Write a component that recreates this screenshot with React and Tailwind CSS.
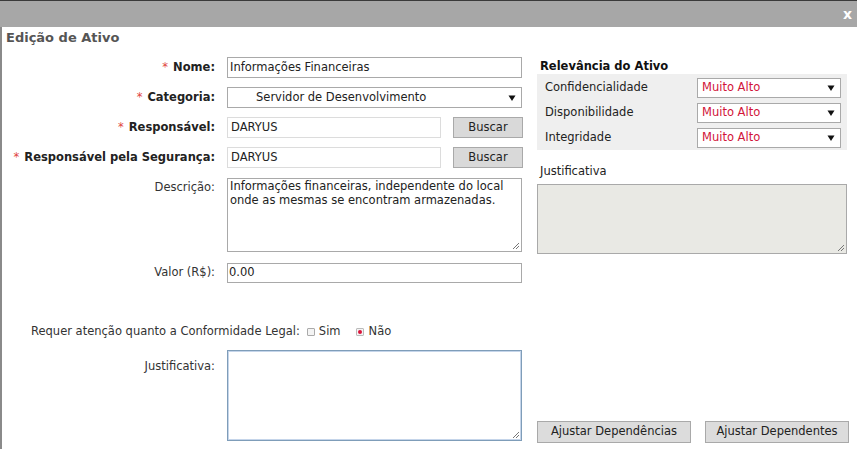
import React from "react";

const Arrow = () => (
  <svg width="8" height="8" viewBox="0 0 8 8" className="block">
    <path d="M0.5 1.5 L7.5 1.5 L4 7 Z" fill="#111" />
  </svg>
);

const Grip = () => (
  <svg width="9" height="9" viewBox="0 0 9 9" className="absolute right-[1px] bottom-[1px]">
    <path d="M8 2 L2 8 M8 5 L5 8" stroke="#777" strokeWidth="1" />
  </svg>
);

function Label({ req, bold, children }) {
  return (
    <div className={`w-[213px] shrink-0 text-right ${bold ? "font-bold text-[#222]" : "text-[#333]"}`}>
      {req && <span className="text-[#e0443e] font-normal mr-[5px]">*</span>}
      {children}
    </div>
  );
}

export default function App() {
  return (
    <div
      className="w-[857px] h-[449px] bg-white overflow-hidden flex flex-col text-[11.5px] text-[#333]"
      style={{ fontFamily: '"DejaVu Sans", Verdana, sans-serif' }}
    >
      <div className="h-[27px] shrink-0 bg-[#a7a7a7] border-t border-[#3a3a3a] flex items-center justify-end pr-[5px]">
        <span className="text-white font-bold text-[14px] leading-none">x</span>
      </div>
      <div className="flex-1 border-l-2 border-[#8a8a8a] flex flex-col pt-[1px]">
        <div className="h-[22px] pl-[4px] pt-[1px] text-[13px] font-bold text-[#555] leading-[18px]">
          Edição de Ativo
        </div>
        <div className="flex">
          {/* Left column */}
          <div className="w-[535px] shrink-0 flex flex-col">
            <div className="flex items-center gap-[12px] mt-[7px] h-[21px]">
              <Label req bold>Nome:</Label>
              <div className="w-[295px] h-[21px] border border-[#a9a9a9] px-[2px] flex items-center text-[#222]">
                Informações Financeiras
              </div>
            </div>
            <div className="flex items-center gap-[12px] mt-[9px] h-[21px]">
              <Label req bold>Categoria:</Label>
              <div className="w-[295px] h-[21px] border border-[#a9a9a9] pl-[28px] pr-[5px] flex items-center justify-between text-[#222]">
                <span>Servidor de Desenvolvimento</span>
                <Arrow />
              </div>
            </div>
            <div className="flex items-center gap-[12px] mt-[9px] h-[21px]">
              <Label req bold>Responsável:</Label>
              <div className="w-[214px] h-[21px] border border-[#dcdcdc] px-[3px] flex items-center text-[#222]">
                DARYUS
              </div>
              <div className="w-[70px] h-[21px] bg-[#d9d9d9] border border-[#a9a9a9] flex items-center justify-center text-[#222]">
                Buscar
              </div>
            </div>
            <div className="flex items-center gap-[12px] mt-[9px] h-[21px]">
              <Label req bold>Responsável pela Segurança:</Label>
              <div className="w-[214px] h-[21px] border border-[#dcdcdc] px-[3px] flex items-center text-[#222]">
                DARYUS
              </div>
              <div className="w-[70px] h-[21px] bg-[#d9d9d9] border border-[#a9a9a9] flex items-center justify-center text-[#222]">
                Buscar
              </div>
            </div>
            <div className="flex items-start gap-[12px] mt-[10px]">
              <div className="pt-[1px]"><Label>Descrição:</Label></div>
              <div className="relative w-[295px] h-[74px] border border-[#a9a9a9] px-[2px] pt-[0px] leading-[14px] text-[#222]">
                Informações financeiras, independente do local onde as mesmas se encontram armazenadas.
                <Grip />
              </div>
            </div>
            <div className="flex items-center gap-[12px] mt-[11px] h-[20px]">
              <Label>Valor (R$):</Label>
              <div className="w-[295px] h-[20px] border border-[#a9a9a9] px-[1px] flex items-center text-[#222]">
                0.00
              </div>
            </div>
            <div className="flex items-center mt-[40px] h-[18px] pl-[29px] text-[#333]">
              <span>Requer atenção quanto a Conformidade Legal:</span>
              <span className="ml-[7px] w-[8px] h-[8px] border border-[#aaa] bg-[#f4f4f4] rounded-[1px]" />
              <span className="ml-[4px]">Sim</span>
              <span className="ml-[15px] w-[8px] h-[8px] border border-[#bbb] bg-[#f4f4f4] rounded-[1px] flex items-center justify-center">
                <span className="w-[4px] h-[4px] rounded-full bg-[#d9143a]" />
              </span>
              <span className="ml-[5px]">Não</span>
            </div>
            <div className="flex items-start gap-[12px] mt-[9px]">
              <div className="pt-[8px]"><Label>Justificativa:</Label></div>
              <div className="relative w-[295px] h-[91px] border border-[#7f9db9] shadow-[inset_0_0_0_1px_#c5d5ea]">
                <Grip />
              </div>
            </div>
          </div>
          {/* Right column */}
          <div className="flex flex-col w-[312px]">
            <div className="mt-[9px] pl-[3px] font-bold text-[#111] leading-[15px]">Relevância do Ativo</div>
            <div className="w-[310px] h-[76px] bg-[#efefef] flex flex-col pt-[4px] gap-[5px]">
              {["Confidencialidade", "Disponibilidade", "Integridade"].map((l) => (
                <div key={l} className="flex items-center h-[20px]">
                  <span className="w-[160px] pl-[8px] text-[#222]">{l}</span>
                  <div className="w-[144px] h-[20px] bg-white border border-[#a9a9a9] pl-[4px] pr-[5px] flex items-center justify-between">
                    <span className="text-[#d2143a]">Muito Alto</span>
                    <Arrow />
                  </div>
                </div>
              ))}
            </div>
            <div className="mt-[14px] pl-[3px] text-[#222] leading-[15px]">Justificativa</div>
            <div className="relative mt-[5px] w-[310px] h-[70px] bg-[#e9e9e4] border border-[#a9a9a9]">
              <Grip />
            </div>
            <div className="flex mt-[167px]">
              <div className="w-[154px] h-[22px] bg-[#dcdcdc] border border-[#a9a9a9] flex items-center justify-center text-[#222]">
                Ajustar Dependências
              </div>
              <div className="ml-[14px] w-[144px] h-[22px] bg-[#dcdcdc] border border-[#a9a9a9] flex items-center justify-center text-[#222]">
                Ajustar Dependentes
              </div>
            </div>
          </div>
        </div>
      </div>
    </div>
  );
}
